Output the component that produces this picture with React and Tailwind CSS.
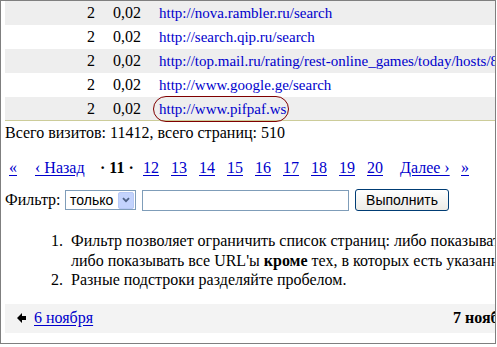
import React from "react";

const rows = [
  { url: "http://nova.rambler.ru/search", shade: true },
  { url: "http://search.qip.ru/search", shade: false },
  { url: "http://top.mail.ru/rating/rest-online_games/today/hosts/8.html", shade: true },
  { url: "http://www.google.ge/search", shade: false },
];

function Row({ url, shade, children, last }) {
  return (
    <div
      className={`flex items-center ${last ? "h-[23px]" : "h-[24px]"} ${shade ? "bg-[#eeeeee]" : "bg-white"}`}
    >
      <div className="w-[90px] shrink-0 text-right">2</div>
      <div className="w-[64px] shrink-0 pl-[18px]">0,02</div>
      <div className="whitespace-nowrap text-[15px]">
        {children || (
          <a className="text-[#0000cc] no-underline" href="#">
            {url}
          </a>
        )}
      </div>
    </div>
  );
}

const link = "text-[#0000cc] underline underline-offset-[2px]";

export default function App() {
  const pages = ["12", "13", "14", "15", "16", "17", "18", "19"];
  return (
    <div className="w-[496px] h-[344px] border border-[#7f7f7f] overflow-hidden bg-white text-black font-['Liberation_Serif',serif] text-[16px] leading-[18px]">
      <div className="ml-[4px] w-[700px]">
        <div className="border-b border-[#cccc99]">
          {rows.map((r) => (
            <Row key={r.url} url={r.url} shade={r.shade} />
          ))}
          <Row shade last>
            <span className="relative inline-block">
              <a className="text-[#0000cc] no-underline" href="#">
                http://www.pifpaf.ws
              </a>
              <span className="absolute left-[-6px] w-[136px] top-[-4px] bottom-[-4px] rounded-full border border-[#800000]" />
            </span>
          </Row>
        </div>

        <div className="mt-[3px]">Всего визитов: 11412, всего страниц: 510</div>

        <div className="mt-[17px] flex items-center whitespace-nowrap">
          <div className="w-[30px] shrink-0 pl-[4px]">
            <a className={link} href="#">«</a>
          </div>
          <div className="w-[65px] shrink-0">
            <a className={link} href="#">‹ Назад</a>
          </div>
          <div className="w-[43px] shrink-0 font-bold">· 11 ·</div>
          {pages.map((p) => (
            <div key={p} className="w-[28px] shrink-0">
              <a className={link} href="#">{p}</a>
            </div>
          ))}
          <div className="w-[33px] shrink-0">
            <a className={link} href="#">20</a>
          </div>
          <div className="w-[61px] shrink-0">
            <a className={link} href="#">Далее ›</a>
          </div>
          <div>
            <a className={link} href="#">»</a>
          </div>
        </div>

        <div className="mt-[12px] flex items-center h-[22px]">
          <span className="w-[60px] shrink-0">Фильтр:</span>
          <div className="h-[20px] w-[71px] shrink-0 border border-[#7f9db9] bg-white flex items-center justify-between pl-[4px] pr-[1px] font-['Liberation_Sans',sans-serif] text-[14px]">
            <span>только</span>
            <span className="w-[16px] h-[17px] rounded-[2px] bg-[#c3d3fd] border border-[#b7c9f5] flex items-center justify-center">
              <svg width="8" height="6" viewBox="0 0 8 6">
                <path d="M1 1.2 L4 4.2 L7 1.2" fill="none" stroke="#4d6185" strokeWidth="1.8" />
              </svg>
            </span>
          </div>
          <div className="ml-[6px] h-[21px] w-[207px] shrink-0 border border-[#7f9db9] bg-white" />
          <button className="ml-[6px] h-[22px] w-[94px] shrink-0 rounded-[3px] border border-[#003c74] bg-gradient-to-b from-white to-[#ecebe6] font-['Liberation_Sans',sans-serif] text-[14px] leading-[20px] text-black">
            Выполнить
          </button>
        </div>

        <div className="mt-[20px] leading-[19.5px] whitespace-nowrap">
          <div className="flex">
            <span className="w-[58px] shrink-0 text-right">1.</span>
            <span className="ml-[8px]">
              Фильтр позволяет ограничить список страниц: либо показывать только те URL'ы, в которых есть указанная подстрока,
              <br />
              либо показывать все URL'ы <b>кроме</b> тех, в которых есть указанная подстрока.
            </span>
          </div>
          <div className="flex">
            <span className="w-[58px] shrink-0 text-right">2.</span>
            <span className="ml-[8px]">Разные подстроки разделяйте пробелом.</span>
          </div>
        </div>

        <div className="mt-[14px] h-[29px] bg-[#f3f3f3] grid grid-cols-[448px_1fr] items-center whitespace-nowrap">
          <div className="flex items-center pl-[12px]">
            <svg width="9" height="10" viewBox="0 0 9 10" className="mr-[8px]">
              <polygon points="0,5 5,0 5,3 9,3 9,7 5,7 5,10" fill="#000" />
            </svg>
            <a className={link} href="#">6 ноября</a>
          </div>
          <div className="font-bold">7 ноября</div>
        </div>
      </div>
    </div>
  );
}
